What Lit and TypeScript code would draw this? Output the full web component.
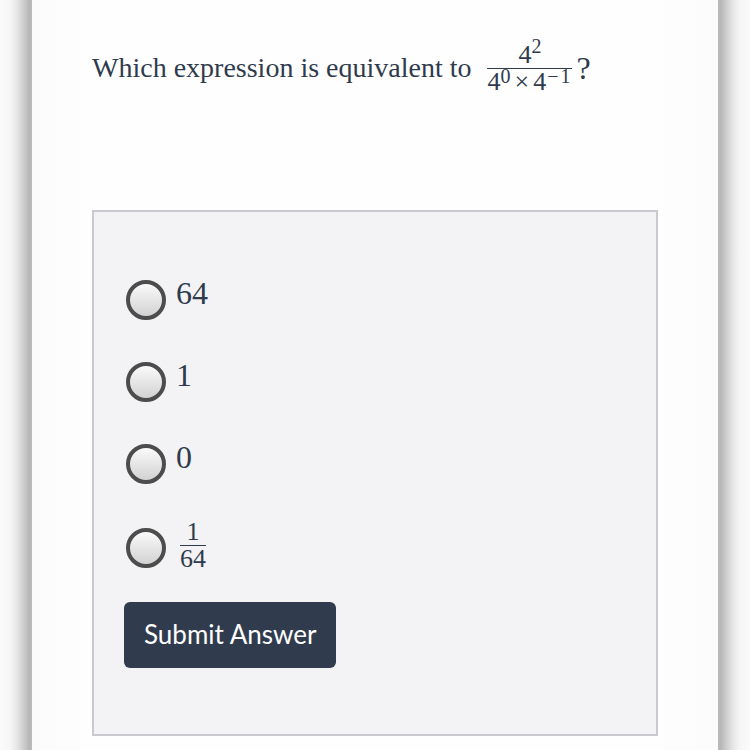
import { LitElement, html, css } from "lit";
import { customElement } from "lit/decorators.js";

@customElement("app-root")
export class AppRoot extends LitElement {
  static styles = css`
    :host {
      --edge: #fafafa, #f6f6f6 10px, #e6e6e6 17px, #cccccc 24px, #b4b4b4 30px, transparent 30px;
      display: block;
      min-height: 100vh;
      padding: 0 30px;
      box-sizing: border-box;
      background: linear-gradient(to right, var(--edge)), linear-gradient(to left, var(--edge));
      color: #2f3b4c;
      font-family: Georgia, "Liberation Serif", serif;
    }
    * { box-sizing: border-box; }
    .sheet {
      min-height: 100vh;
      padding: 32px 60px 14px;
      background: linear-gradient(to right, #fbfbfb, #fefefe 60px, #fefefe calc(100% - 60px), #fbfbfb);
      border: solid #b9b9b9;
      border-width: 0 2px;
    }
    .question {
      display: flex;
      align-items: center;
      min-height: 72px;
      margin: 0 0 106px;
      font-size: 28px;
      line-height: 32px;
      font-weight: 400;
    }
    .math { font-family: "Liberation Serif", serif; }
    .frac {
      display: inline-flex;
      flex-direction: column;
      align-items: center;
      font-size: 26px;
      line-height: 26px;
    }
    .den { border-top: 1px solid #2f3b4c; }
    .question .frac { margin: 0 4px 0 16px; }
    .question .den { white-space: nowrap; }
    sup {
      font-size: 20px;
      line-height: 0;
      vertical-align: 10px;
    }
    .den sup { vertical-align: 7px; }
    .times { margin: 0 4px; }
    .minus { margin: 0 2px 0 1px; }
    .den .end { margin-right: 2px; }
    .mark { font-size: 32px; }
    .answers {
      padding: 60px 30px 66px;
      background: #f3f3f5;
      border: 2px solid #c9cacf;
    }
    fieldset {
      display: flex;
      flex-direction: column;
      gap: 26px;
      margin: 0 0 24px;
      padding: 0 2px;
      border: 0;
    }
    .option {
      display: flex;
      align-items: center;
      gap: 10px;
      min-height: 56px;
      font-size: 32px;
      line-height: 26px;
    }
    .whole { padding-bottom: 14px; }
    .option .frac { padding: 1px 4px 6px; }
    input {
      appearance: none;
      flex: none;
      width: 40px;
      height: 40px;
      margin: 0;
      border: 4px solid #4c4c4c;
      border-radius: 50%;
      background: linear-gradient(#fafafa, #d2d2d2);
    }
    input:checked { background: radial-gradient(#4c4c4c 35%, #e6e6e6 40%); }
    button {
      display: block;
      padding: 16px 20px 18px;
      border: 0;
      border-radius: 6px;
      background: #303c4e;
      color: #fff;
      font: 26px/32px Lato, sans-serif;
    }
  `;

  render() {
    return html`
      <main class="sheet">
        <h1 class="question" id="question">
          <span>Which expression is equivalent to</span>
          <span class="frac math">
            <span>4<sup>2</sup></span>
            <span class="den">4<sup>0</sup><span class="times">×</span>4<sup class="end"><span class="minus">−</span>1</sup></span>
          </span>
          <span class="mark math">?</span>
        </h1>
        <form class="answers" @submit=${(e: Event) => e.preventDefault()}>
          <fieldset aria-labelledby="question">
            ${["64", "1", "0"].map(
              (value) => html`<label class="option math">
                <input type="radio" name="answer" value=${value} />
                <span class="whole">${value}</span>
              </label>`
            )}
            <label class="option math">
              <input type="radio" name="answer" value="1/64" />
              <span class="frac"><span>1</span><span class="den">64</span></span>
            </label>
          </fieldset>
          <button type="submit">Submit Answer</button>
        </form>
      </main>
    `;
  }
}
